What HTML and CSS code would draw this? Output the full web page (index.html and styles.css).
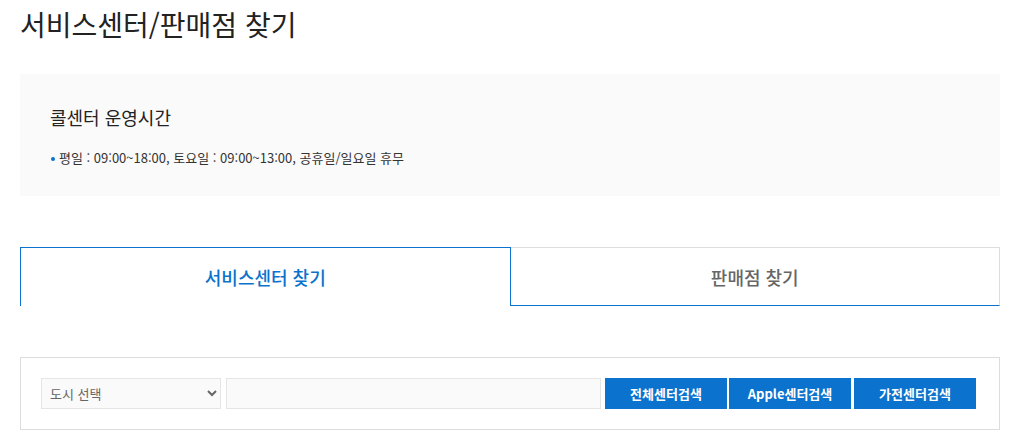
FILE: index.html
```html
<!DOCTYPE html>
<html lang="ko">
<head>
    <meta charset="UTF-8">
    <meta name="viewport" content="width=device-width, initial-scale=1.0">
    <title>서비스센터/판매점 찾기</title>
    <link rel="stylesheet" href="styles.css">
</head>
<body>
    <div class="page">
        <h1 class="page-title">서비스센터/판매점 찾기</h1>

        <div class="notice">
            <h3 class="notice-title">콜센터 운영시간</h3>
            <ul class="notice-list">
                <li>평일 : 09:00~18:00, 토요일 : 09:00~13:00, 공휴일/일요일 휴무</li>
            </ul>
        </div>

        <div class="tabs">
            <a class="tab active" href="#">서비스센터 찾기</a>
            <a class="tab" href="#">판매점 찾기</a>
        </div>

        <form class="search-box">
            <select class="city-select">
                <option value="">도시 선택</option>
            </select>
            <input type="text" class="keyword">
            <button type="button" class="btn btn-all">전체센터검색</button>
            <button type="button" class="btn btn-apple">Apple센터검색</button>
            <button type="button" class="btn btn-home">가전센터검색</button>
        </form>
    </div>
</body>
</html>
```

FILE: styles.css
```css
body {
    margin: 0;
    font-family: "Noto Sans CJK KR", "Noto Sans", sans-serif;
    color: #222;
    background: #fff;
}
.page {
    width: 980px;
    padding: 0 20px;
}
.page-title {
    margin: 0;
    font-size: 28px;
    font-weight: 400;
    line-height: 48px;
    color: #222;
}

/* call center box */
.notice {
    margin-top: 26px;
    padding: 30px 30px 28px;
    background: #fafafa;
}
.notice-title {
    margin: 0;
    font-size: 18px;
    font-weight: 400;
    line-height: 26px;
}
.notice-list {
    margin: 18px 0 0;
    padding: 0;
    list-style: none;
}
.notice-list li {
    position: relative;
    padding-left: 9px;
    font-size: 13px;
    line-height: 20px;
    color: #333;
}
.notice-list li::before {
    content: "";
    position: absolute;
    left: 1px;
    top: 9px;
    width: 4px;
    height: 4px;
    border-radius: 50%;
    background: #0b72cd;
}

/* tabs */
.tabs {
    display: flex;
    margin-top: 51px;
}
.tab {
    flex: 1;
    height: 59px;
    box-sizing: border-box;
    display: flex;
    align-items: center;
    justify-content: center;
    font-size: 18px;
    font-weight: 500;
    color: #666;
    text-decoration: none;
    border-top: 1px solid #ddd;
    border-right: 1px solid #ddd;
    border-bottom: 1px solid #0b72cd;
}
.tab.active {
    color: #0b72cd;
    border: 1px solid #0b72cd;
    border-bottom: none;
}

/* search */
.search-box {
    display: flex;
    margin: 51px 0 0;
    padding: 20px 22px 20px 20px;
    border: 1px solid #ddd;
}
.city-select {
    width: 180px;
    height: 31px;
    padding: 0 4px;
    font-family: inherit;
    font-size: 13px;
    color: #666;
    background: #fafafa;
    border: 1px solid #e5e5e5;
    border-radius: 0;
}
.keyword {
    width: 375px;
    height: 31px;
    box-sizing: border-box;
    margin-left: 5px;
    background: #fafafa;
    border: 1px solid #e5e5e5;
}
.btn {
    width: 122px;
    height: 31px;
    padding: 0;
    font-family: inherit;
    font-size: 13px;
    font-weight: 700;
    color: #fff;
    background: #0b72cd;
    border: none;
    cursor: pointer;
}
.btn-all {
    margin-left: 4px;
}
.btn-apple {
    margin-left: 2px;
}
.btn-home {
    margin-left: 3px;
}
```
